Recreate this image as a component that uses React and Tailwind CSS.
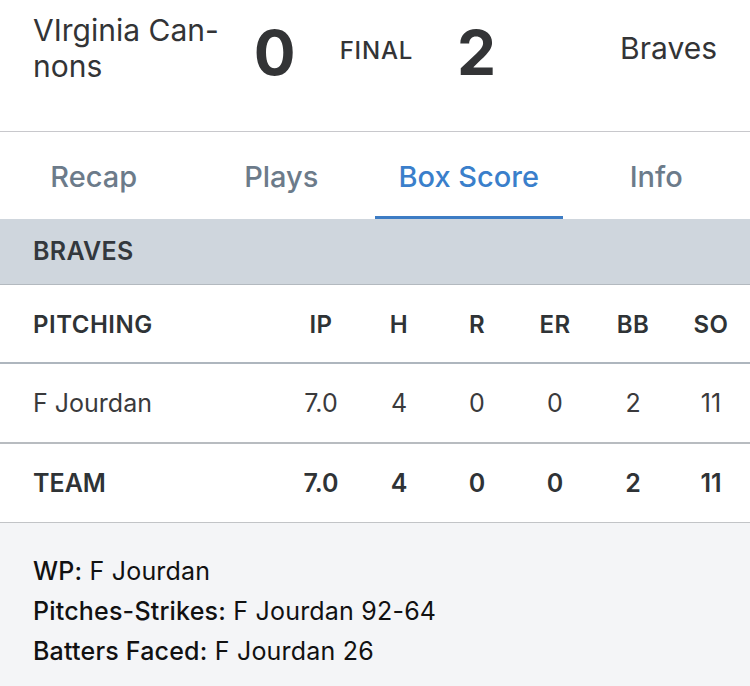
import React from "react";

const cols = ["IP", "H", "R", "ER", "BB", "SO"];
const pitcher = ["7.0", "4", "0", "0", "2", "11"];
const team = ["7.0", "4", "0", "0", "2", "11"];

function Row({ name, values, bold, header, className }) {
  const txt = header
    ? "text-[24px] tracking-[0.5px] font-semibold text-[#2f3336]"
    : bold
    ? "text-[25px] font-semibold text-[#2f3336]"
    : "text-[25px] text-[#3a3a3c]";
  return (
    <div className={`grid grid-cols-[1fr_repeat(6,78px)] items-center ${className}`}>
      <div className={`pl-[33px] ${txt}`}>{name}</div>
      {values.map((v, i) => (
        <div key={i} className={`text-center ${txt}`}>
          {v}
        </div>
      ))}
    </div>
  );
}

export default function App() {
  return (
    <div
      className="w-[750px] h-[686px] bg-white overflow-hidden"
      style={{ fontFamily: "Inter, 'Noto Sans', sans-serif" }}
    >
      {/* Header */}
      <div className="h-[132px] border-b border-[#c8c8cc] px-[33px] pt-[12px]">
        <div className="flex items-center h-[72px]">
          <div className="flex-1 min-w-0 text-[30px] leading-[36px] text-[#333436]">
            <div>VIrginia Can-</div>
            <div>nons</div>
          </div>
          <div className="flex items-center gap-[44px]">
            <div className="mt-[9px] text-[62px] font-bold leading-none text-[#333436]">0</div>
            <div className="mt-[6px] text-[24px] font-medium tracking-[0.8px] text-[#333436]">FINAL</div>
            <div className="mt-[9px] text-[62px] font-bold leading-none text-[#333436]">2</div>
          </div>
          <div className="flex-1 min-w-0 text-right text-[30px] leading-[36px] text-[#333436]">
            Braves
          </div>
        </div>
      </div>

      {/* Tabs */}
      <div className="grid grid-cols-4 h-[87px]">
        {["Recap", "Plays", "Box Score", "Info"].map((t) => {
          const active = t === "Box Score";
          return (
            <div
              key={t}
              className={`flex items-center justify-center pt-[5px] text-[29px] font-medium border-b-[3px] ${
                active
                  ? "text-[#3a7fcb] border-[#3d7cc4]"
                  : "text-[#6c7b8a] border-transparent"
              }`}
            >
              {t}
            </div>
          );
        })}
      </div>

      {/* Team band */}
      <div className="h-[66px] bg-[#cfd6dd] border-b border-[#b3b9bf] flex items-center pl-[33px]">
        <span className="text-[25px] font-semibold tracking-[0.3px] text-[#33383d]">BRAVES</span>
      </div>

      {/* Table */}
      <Row name="PITCHING" values={cols} header className="h-[79px] pt-[2px] border-b-2 border-[#aeb6be]" />
      <Row name="F Jourdan" values={pitcher} className="h-[80px] pt-[2px] border-b-2 border-[#b8bcc0]" />
      <Row name="TEAM" values={team} bold className="h-[79px] pt-[2px] border-b border-[#c2c4c7]" />

      {/* Footer */}
      <div className="bg-[#f4f5f7] h-full pt-[28px] pl-[33px] text-[25px] tracking-[0.2px] leading-[40px] text-[#111111]">
        <div>
          <span className="font-medium">WP:</span> F Jourdan
        </div>
        <div>
          <span className="font-medium">Pitches-Strikes:</span> F Jourdan 92-64
        </div>
        <div>
          <span className="font-medium">Batters Faced:</span> F Jourdan 26
        </div>
      </div>
    </div>
  );
}
